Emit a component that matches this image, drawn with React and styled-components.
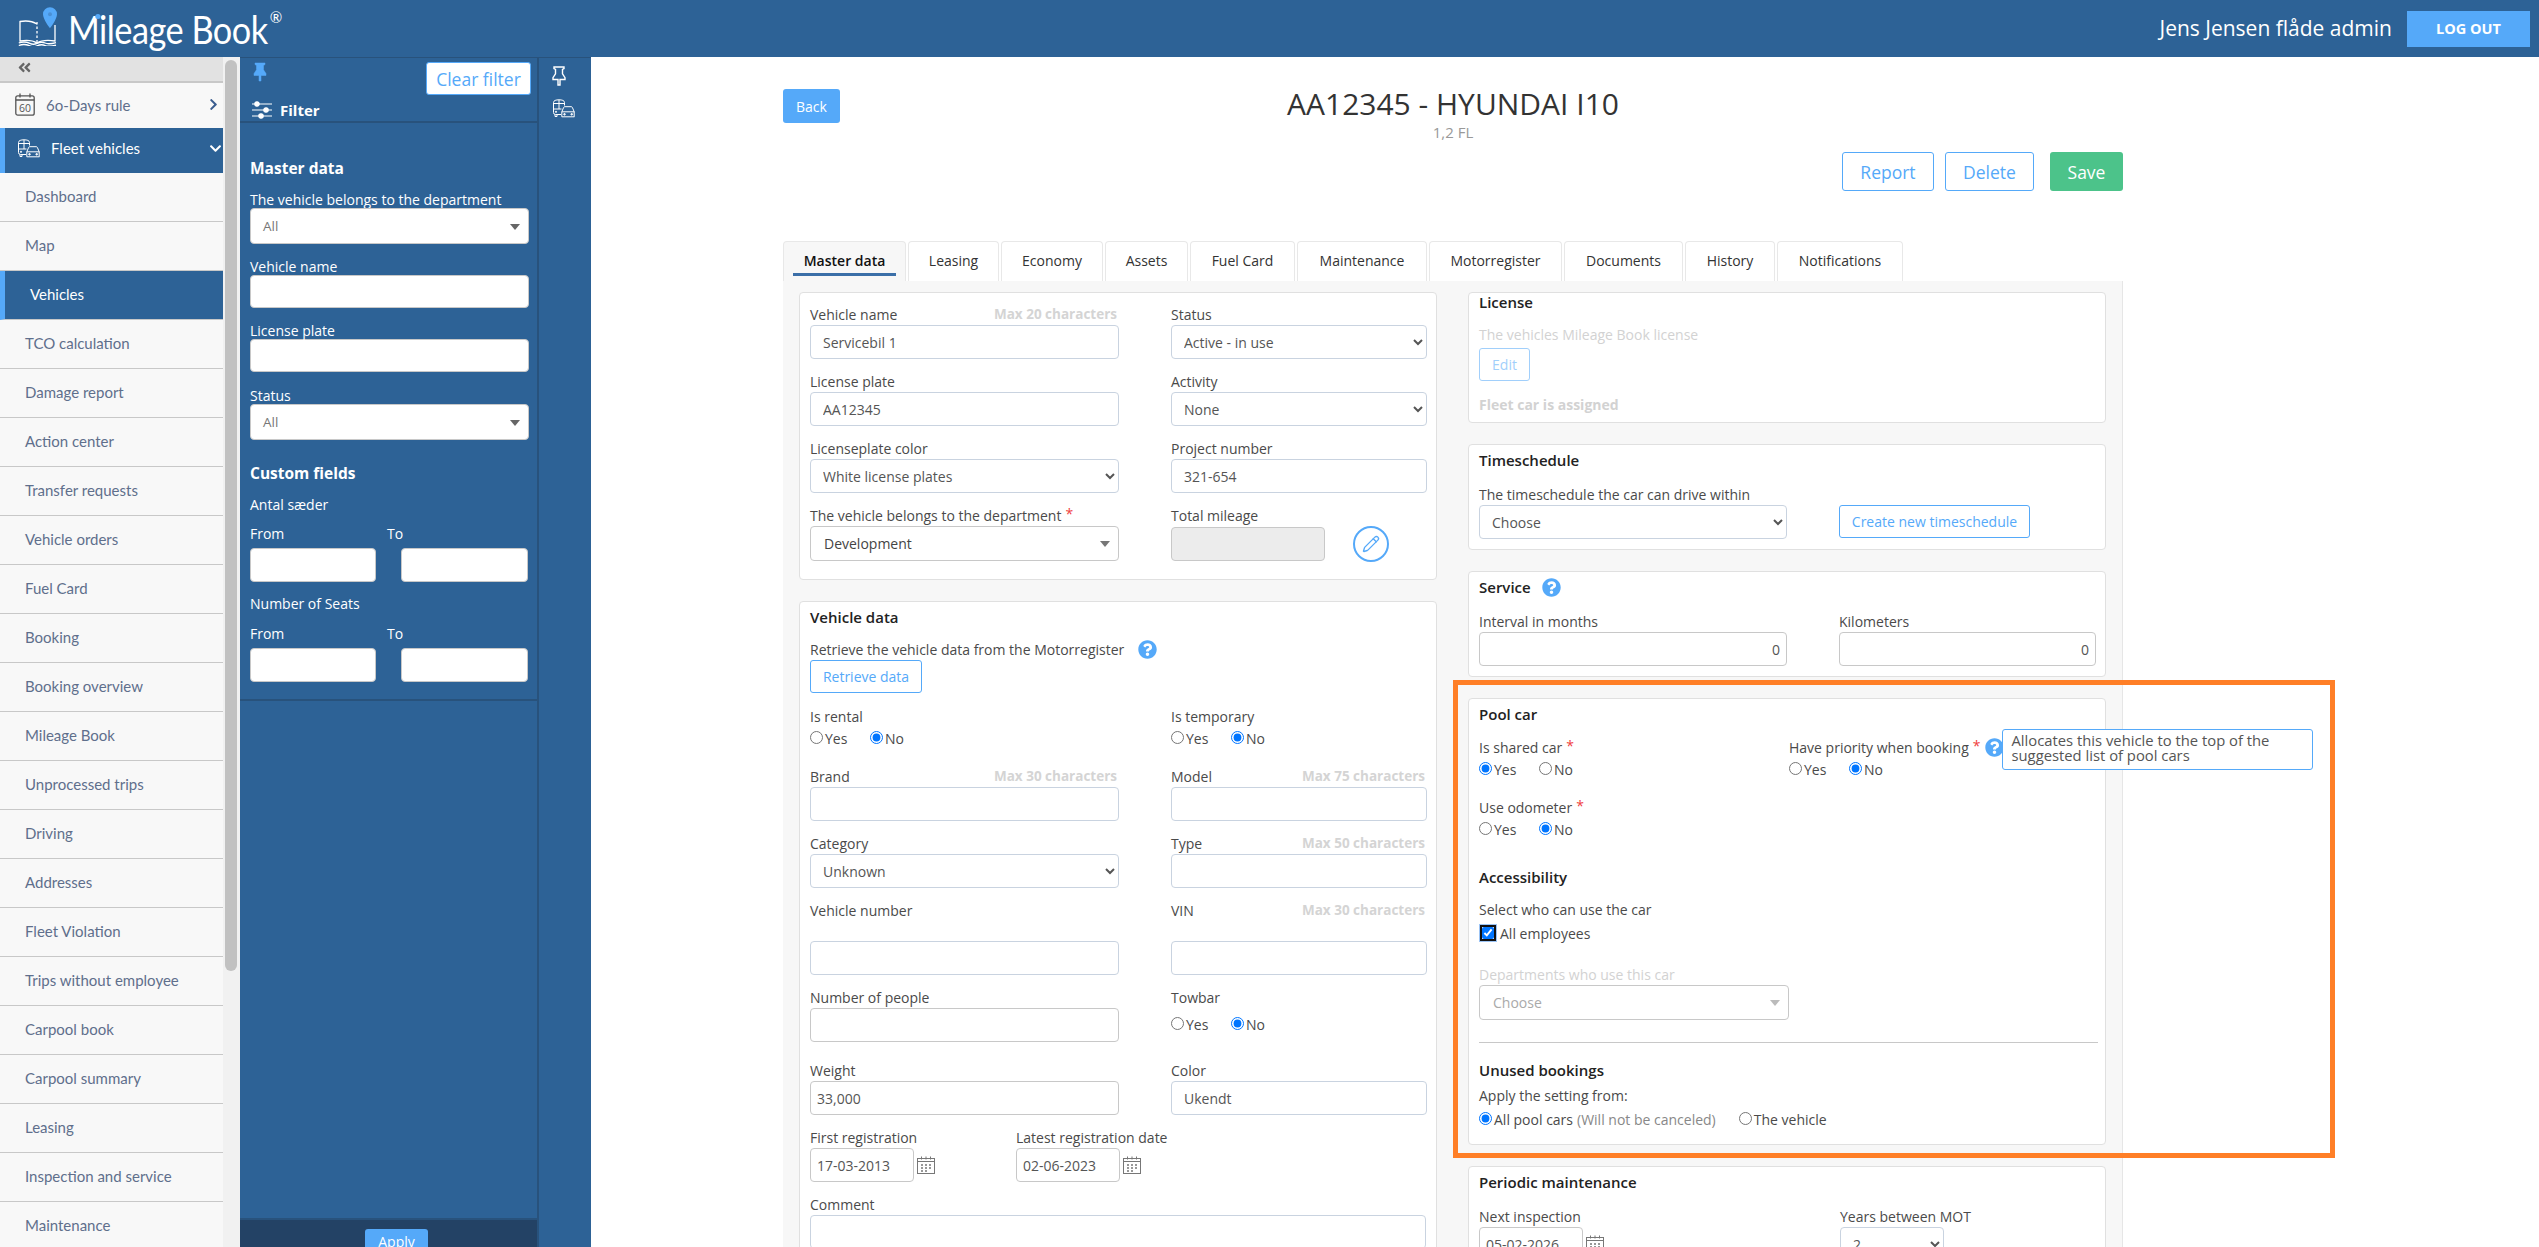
import styled, { createGlobalStyle } from "styled-components";
import { FaChevronRight, FaChevronDown, FaAngleDoubleLeft, FaQuestionCircle } from "react-icons/fa";
import { Pencil } from "lucide-react";

const BLUE = "#2d6296";
const SKY = "#55a9f9";

const GlobalStyle = createGlobalStyle`
  html, body {
    margin: 0;
    height: 100%;
    overflow: hidden;
    background: #fff;
    font-family: "Open Sans", "Liberation Sans", sans-serif;
    font-size: 14px;
    color: #4a4a4a;
  }
  * { box-sizing: border-box; }
`;

const Page = styled.div`
  height: 100vh;
  display: flex;
  flex-direction: column;
  overflow: hidden;
`;

/* ---- header ---- */
const TopBar = styled.header`
  height: 57px;
  flex: none;
  background: ${BLUE};
  display: flex;
  align-items: center;
  justify-content: space-between;
  padding: 0 9px 2px 18px;
  color: #fff;
`;
const Logo = styled.div`
  display: flex;
  align-items: flex-start;
  height: 43px;
  margin-top: 2px;
`;
const LogoText = styled.span`
  position: relative;
  display: inline-block;
  margin-left: 11px;
  margin-right: -27px;
  font-family: Lato, "Open Sans", sans-serif;
  font-size: 39px;
  line-height: 44px;
  letter-spacing: -0.6px;
  color: #fff;
  transform: scaleX(0.88);
  transform-origin: left center;
  &::after {
    content: "";
    position: absolute;
    left: 31px;
    top: 7px;
    width: 6px;
    height: 5px;
    border-radius: 50%;
    background: ${SKY};
  }
`;
const LogoMark = styled.sup`
  font-family: Lato, sans-serif;
  font-size: 15px;
  line-height: 15px;
  margin: 3px 0 0 2px;
  vertical-align: top;
`;
const UserBox = styled.div`
  display: flex;
  align-items: center;
  gap: 15px;
`;
const UserName = styled.span`
  font-size: 21px;
`;
const LogoutButton = styled.button`
  width: 123px;
  height: 36px;
  margin-top: 2px;
  border: 0;
  background: ${SKY};
  color: #fff;
  font: 700 14.5px "Open Sans", sans-serif;
`;

const Body = styled.div`
  flex: 1;
  min-height: 0;
  display: flex;
`;

/* ---- left menu ---- */
const SideMenu = styled.nav`
  width: 240px;
  flex: none;
  display: flex;
  overflow: hidden;
  background: #f1f1f1;
`;
const MenuList = styled.div`
  width: 223px;
  flex: none;
`;
const ScrollTrack = styled.div`
  flex: 1;
  padding: 3px 3px 0 2px;
`;
const ScrollThumb = styled.div`
  height: 911px;
  border-radius: 6px;
  background: #c1c1c1;
`;
const Collapse = styled.div`
  height: 26px;
  background: #e2e2e2;
  border-bottom: 2px solid #c8c8c8;
  padding: 3px 0 0 17px;
  color: #666;
  font-size: 15px;
  svg { display: block; }
`;
const MenuHead = styled.div`
  height: 45px;
  display: flex;
  align-items: center;
  padding-left: ${(p) => (p.$active ? 12 : 15)}px;
  padding-right: 3px;
  padding-bottom: ${(p) => (p.$active ? 5 : 2)}px;
  background: ${(p) => (p.$active ? BLUE : "#f8f8f8")};
  border-left: ${(p) => (p.$active ? `5px solid ${SKY}` : "0")};
  color: ${(p) => (p.$active ? "#fff" : "#5f6f8c")};
  font-family: Lato, sans-serif;
  font-size: 15px;
`;
const HeadLabel = styled.span`
  flex: 1;
  margin-left: ${(p) => p.$gap}px;
`;
const HeadChevron = styled.span`
  display: flex;
  font-size: 13px;
  color: ${(p) => p.$color};
  margin-right: ${(p) => p.$right}px;
`;
const MenuItem = styled.div`
  height: 49px;
  display: flex;
  align-items: center;
  padding-left: 25px;
  padding-bottom: 2px;
  background: ${(p) => (p.$active ? BLUE : "#f8f8f8")};
  border-left: ${(p) => (p.$active ? `5px solid ${SKY}` : "0")};
  border-bottom: 1px solid #c8c8c8;
  color: ${(p) => (p.$active ? "#fff" : "#5f6f8c")};
  font-family: Lato, sans-serif;
  font-size: 15px;
`;

/* ---- filter panel ---- */
const FilterPanel = styled.aside`
  width: 299px;
  flex: none;
  display: flex;
  flex-direction: column;
  background: ${BLUE};
  color: #fff;
  border-right: 2px solid #28527c;
  border-top: 1px solid #28527c;
`;
const FilterHead = styled.div`
  height: 65px;
  flex: none;
  display: grid;
  grid-template-columns: 1fr auto;
  grid-template-rows: 38px 1fr;
  padding: 4px 6px 0 13px;
  border-bottom: 2px solid #28527c;
`;
const ClearButton = styled.button`
  width: 105px;
  height: 33px;
  padding: 0;
  border: 1px solid ${SKY};
  border-radius: 3px;
  background: #fff;
  color: ${SKY};
  font: 17.5px "Open Sans", sans-serif;
`;
const FilterTitle = styled.div`
  grid-column: 1 / 3;
  display: flex;
  align-items: center;
  gap: 8px;
  margin-left: -1px;
  font-weight: 700;
  font-size: 15px;
  padding-bottom: 11px;
`;
const FilterForm = styled.div`
  padding: 35px 8px 3px 10px;
  border-bottom: 2px solid #28527c;
`;
const FilterHeading = styled.h4`
  margin: ${(p) => p.$top}px 0 ${(p) => p.$bottom}px;
  font-size: 15.5px;
  line-height: 20px;
  font-weight: 700;
`;
const FilterField = styled.div`
  margin-bottom: ${(p) => p.$mb ?? 15}px;
`;
const FilterLabel = styled.div`
  font-size: 14px;
  line-height: 16px;
  white-space: nowrap;
`;
const FilterInput = styled.div`
  height: ${(p) => p.$h ?? 33}px;
  background: #fff;
  border: 1px solid #c8c8c8;
  border-radius: 4px;
`;
const FilterSelect = styled(FilterInput)`
  position: relative;
  display: flex;
  align-items: center;
  padding-left: 12px;
  color: #777;
  font-size: 13.5px;
  &::after {
    content: "";
    position: absolute;
    right: 8px;
    top: 15px;
    border: 5px solid transparent;
    border-top: 6px solid #666;
    border-bottom: 0;
  }
`;
const RangeRow = styled.div`
  display: grid;
  grid-template-columns: 137px 143px;
  margin-bottom: 14px;
`;
const FromInput = styled(FilterInput)`
  width: 126px;
  height: 34px;
  margin-top: 6px;
`;
const ToInput = styled(FromInput)`
  width: 127px;
  margin-left: 14px;
`;
const ApplyBar = styled.div`
  margin-top: auto;
  height: 29px;
  flex: none;
  overflow: hidden;
  display: flex;
  justify-content: center;
  padding: 9px 0 0 16px;
  background: #234265;
  border-top: 2px solid #28527c;
`;
const ApplyButton = styled.button`
  width: 63px;
  height: 34px;
  border: 0;
  border-radius: 3px;
  background: ${SKY};
  color: #fff;
  font: 14px "Open Sans", sans-serif;
  padding-bottom: 10px;
`;

const Rail = styled.div`
  width: 52px;
  flex: none;
  background: ${BLUE};
  padding: 8px 0 0 13px;
  border-top: 1px solid #28527c;
  display: flex;
  flex-direction: column;
  gap: 13px;
  svg { display: block; }
`;

/* ---- main ---- */
const Main = styled.main`
  position: relative;
  flex: 1;
  min-width: 0;
  overflow: hidden;
  padding: 32px 0 0 192px;
`;
const Highlight = styled.div`
  position: absolute;
  left: 862px;
  top: 623px;
  width: 882px;
  height: 478px;
  border: 5px solid #ff7f27;
  pointer-events: none;
`;
const Content = styled.div`
  width: 1340px;
`;
const TitleRow = styled.div`
  display: grid;
  grid-template-columns: 1fr auto 1fr;
  align-items: start;
  height: 63px;
`;
const BackButton = styled.button`
  width: 57px;
  height: 34px;
  border: 0;
  border-radius: 3px;
  background: ${SKY};
  color: #fff;
  font: 14px "Open Sans", sans-serif;
`;
const TitleBlock = styled.div`
  text-align: center;
`;
const Title = styled.h1`
  margin: -3px 0 0;
  font-size: 30px;
  line-height: 36px;
  font-weight: 400;
  color: #333;
`;
const SubTitle = styled.div`
  margin-top: 2px;
  font-size: 15px;
  line-height: 16px;
  color: #999;
`;
const Actions = styled.div`
  display: flex;
  justify-content: flex-end;
  gap: 11px;
  height: 89px;
`;
const OutlineButton = styled.button`
  display: block;
  height: ${(p) => p.$h ?? 33}px;
  width: ${(p) => p.$w}px;
  margin-right: ${(p) => p.$right ?? 0}px;
  border: 1px solid ${SKY};
  border-radius: 3px;
  background: #fff;
  color: ${SKY};
  font: ${(p) => p.$size ?? 14}px "Open Sans", sans-serif;
  padding: 0;
  opacity: ${(p) => (p.$faded ? 0.55 : 1)};
`;
const SaveButton = styled.button`
  width: 73px;
  height: 39px;
  border: 0;
  border-radius: 3px;
  background: #4cc38a;
  color: #fff;
  font: 17.5px "Open Sans", sans-serif;
`;
const Tabs = styled.div`
  display: flex;
  gap: 2px;
  height: 40px;
`;
const Tab = styled.div`
  position: relative;
  width: ${(p) => p.$w}px;
  display: flex;
  align-items: center;
  justify-content: center;
  padding-bottom: 2px;
  border: 1px solid #e8e8e8;
  border-bottom: 0;
  border-radius: 4px 4px 0 0;
  background: ${(p) => (p.$active ? "#f7f7f7" : "#fff")};
  color: ${(p) => (p.$active ? "#111" : "#333")};
  font-weight: ${(p) => (p.$active ? 600 : 400)};
  &::after {
    content: "";
    display: ${(p) => (p.$active ? "block" : "none")};
    position: absolute;
    left: 9px;
    right: 9px;
    bottom: 5px;
    height: 3px;
    background: #3b6fa8;
  }
`;
const TabPanel = styled.div`
  display: flex;
  align-items: flex-start;
  gap: 31px;
  height: 1000px;
  padding: 11px 16px 0;
  background: #f7f7f7;
  border-right: 1px solid #e6e6e6;
`;
const Column = styled.div`
  width: 638px;
  flex: none;
  display: flex;
  flex-direction: column;
  gap: 21px;
`;
const Card = styled.section`
  background: #fff;
  border: 1px solid #e0e0e0;
  border-radius: 4px;
  padding: ${(p) => p.$top ?? 6}px 10px ${(p) => p.$bottom ?? 10}px;
`;
const CardTitle = styled.h3`
  display: flex;
  align-items: center;
  gap: 11px;
  margin: 0 0 ${(p) => p.$mb ?? 11}px;
  padding-bottom: 2px;
  height: 20px;
  font-size: 15px;
  line-height: 18px;
  font-weight: 600;
  color: #222;
`;
const Row = styled.div`
  display: grid;
  grid-template-columns: ${(p) => p.$cols ?? "309px 256px"};
  column-gap: ${(p) => p.$gap ?? 52}px;
  margin-bottom: ${(p) => p.$mb ?? 13}px;
`;
const Field = styled.div`
  min-width: 0;
`;
const Label = styled.div`
  display: flex;
  align-items: center;
  height: 20px;
  padding-bottom: 2px;
  white-space: nowrap;
  font-size: 14px;
  color: ${(p) => (p.$muted ? "#d2d2d2" : "#4a4a4a")};
  font-weight: ${(p) => (p.$bold ? 700 : 400)};
`;
const Hint = styled.span`
  margin-left: auto;
  padding-right: 2px;
  color: #d4d4d4;
  font-size: 13.5px;
  font-weight: 700;
`;
const Star = styled.span`
  align-self: flex-start;
  margin-left: 4px;
  color: #f04040;
  font-size: 14px;
  line-height: 16px;
`;
const Input = styled.input`
  display: block;
  width: ${(p) => p.$w ?? "100%"};
  height: 34px;
  margin-top: ${(p) => p.$mt ?? 0}px;
  padding: 0 ${(p) => p.$pad ?? 12}px;
  border: 1px solid ${(p) => (p.$gray ? "#c8c8c8" : "#c9d3e0")};
  border-radius: 4px;
  background: ${(p) => (p.$disabled ? "#ececec" : "#fff")};
  color: #555;
  font: 14px "Open Sans", sans-serif;
  text-align: ${(p) => p.$align ?? "left"};
  outline: none;
`;
const NativeSelect = styled.select`
  display: block;
  width: ${(p) => p.$w ?? "100%"};
  height: 34px;
  padding: 0 8px;
  border: 1px solid #c9d3e0;
  border-radius: 4px;
  background-color: #fff;
  color: #555;
  font: 14px "Open Sans", sans-serif;
`;
const CaretSelect = styled.div`
  position: relative;
  display: flex;
  align-items: center;
  height: 35px;
  width: ${(p) => p.$w ?? "100%"};
  padding-left: 13px;
  border: 1px solid #c8c8c8;
  border-radius: 4px;
  color: ${(p) => (p.$muted ? "#aaa" : "#444")};
  &::after {
    content: "";
    position: absolute;
    right: 8px;
    top: 14px;
    border: 5px solid transparent;
    border-top: 6px solid ${(p) => (p.$muted ? "#bbb" : "#777")};
    border-bottom: 0;
  }
`;
const MileageRow = styled.div`
  display: flex;
  align-items: center;
  gap: 28px;
`;
const MileageEdit = styled.button`
  width: 36px;
  height: 36px;
  display: flex;
  align-items: center;
  justify-content: center;
  padding: 0;
  border: 2px solid ${SKY};
  border-radius: 50%;
  background: #fff;
  color: ${SKY};
`;
const InlineHelp = styled.span`
  display: inline-flex;
  color: ${SKY};
  font-size: ${(p) => p.$size ?? 19}px;
  margin-left: ${(p) => p.$left ?? 0}px;
`;
const RetrieveLine = styled.div`
  display: flex;
  align-items: center;
  height: 20px;
  margin-bottom: 1px;
`;
const Radios = styled.div`
  display: flex;
  height: 22px;
  margin-top: ${(p) => p.$mt ?? 0}px;
  margin-bottom: ${(p) => p.$mb ?? 0}px;
`;
const RadioLabel = styled.label`
  display: flex;
  align-items: center;
  min-width: 60px;
  margin-right: ${(p) => p.$right ?? 0}px;
  color: #4a4a4a;
  input {
    width: 13px;
    height: 13px;
    margin: -2px 2px 0 0;
  }
`;
const Muted = styled.span`
  margin-left: 4px;
  color: #888;
`;
const DateLine = styled.div`
  display: flex;
  align-items: center;
  gap: 3px;
`;
const DateGroup = styled.div`
  width: 206px;
`;
const CheckLine = styled.label`
  display: flex;
  align-items: center;
  gap: 6px;
  height: 22px;
  margin-top: 2px;
  margin-bottom: 21px;
  padding-left: 3px;
  input {
    width: 12px;
    height: 12px;
    margin: 0;
    border-radius: 2px;
    box-shadow: 0 0 0 2px #111, 0 0 0 3px #9cc4f5;
  }
`;
const Rule = styled.hr`
  margin: 22px -3px 18px 0;
  border: 0;
  border-top: 1px solid #c8c8c8;
`;
const Tip = styled.div`
  position: absolute;
  left: 17px;
  top: -9px;
  width: 311px;
  height: 41px;
  padding: 3px 8px;
  background: #fff;
  border: 1px solid ${SKY};
  border-radius: 3px;
  font-size: 14.8px;
  line-height: 15px;
  white-space: normal;
  color: #555;
  z-index: 2;
`;
const TipAnchor = styled.span`
  position: relative;
  display: inline-flex;
  margin-left: 5px;
  color: ${SKY};
  font-size: 19px;
`;
const Spacer = styled.div`
  height: ${(p) => p.$h}px;
`;

/* ---- drawings ---- */
const PinIcon = ({ solid }) => (
  <svg width="14" height="20" viewBox="0 0 14 20" fill={solid ? SKY : "none"} stroke={solid ? SKY : "#fff"} strokeWidth={solid ? 0.5 : 1.4}>
    <path d="M2 1h10v1.6l-1.5.8v4.4L13 11.6v1.9H8V19H6v-5.5H1v-1.9l2.5-3.8V3.4L2 2.6z" />
  </svg>
);

const BusCarIcon = ({ w = 24, h = 19 }) => (
  <svg width={w} height={h} viewBox="0 0 24 19" fill="none" stroke="#fff" strokeWidth="1">
    <path d="M9 15.5H3.5A2 2 0 0 1 1.5 13.5V3.5C1.5 1.500 4 .8 7 .8s5.500.7 5.500 2.700V6.500" />
    <path d="M1.500 4.500h11M1.500 10h8M7 .8v9.200M3 15.500v2h2v-2" />
    <path d="M9.800 17.800v-5l1.800-4.300a1.200 1.200 0 0 1 1.100-.8h6.600a1.200 1.200 0 0 1 1.100.8l1.800 4.300v5" />
    <path d="M9.800 17.800h12.600M9.800 12.800h12.600" />
    <circle cx="4" cy="12.800" r=".6" fill="#fff" />
    <circle cx="12.500" cy="15.300" r=".8" fill="#fff" />
    <circle cx="19.700" cy="15.300" r=".8" fill="#fff" />
  </svg>
);

const SlidersIcon = () => (
  <svg width="20" height="18" viewBox="0 0 20 18" fill="#fff" stroke="#fff" strokeWidth="1.2">
    <path d="M0 3h20M0 9h20M0 15h20" />
    <circle cx="5" cy="3" r="2.200" />
    <circle cx="14" cy="9" r="2.200" />
    <circle cx="9" cy="15" r="2.200" />
  </svg>
);

const SixtyIcon = () => (
  <svg width="20" height="23" viewBox="0 0 20 23" fill="none" stroke="#555" strokeWidth="1.300">
    <rect x=".8" y="2.800" width="18.400" height="19.400" rx="2" />
    <path d="M.8 7h18.400M5 .5v4M15 .5v4" />
    <text x="10" y="19" textAnchor="middle" fontFamily="Open Sans" fontSize="10.500" fill="#555" stroke="none">60</text>
  </svg>
);

const CalendarIcon = () => (
  <svg width="18" height="18" viewBox="0 0 18 18" fill="none" stroke="#777" strokeWidth="1">
    <rect x=".5" y="2.500" width="17" height="15" />
    <path d="M.5 5.500h17M4.500 .5v3M9 .5v3M13.500 .5v3" />
    <path d="M4 9h2M8 9h2M12 9h2M4 12h2M8 12h2M12 12h2M4 15h2M8 15h2" strokeWidth="1.400" />
  </svg>
);

const BookLogo = () => (
  <svg width="39" height="39" viewBox="0 0 39 39" fill="none" stroke="#fff" strokeWidth="1.300">
    <path d="M19 17C15 14.500 8 13.500 2 14.500V34C8 33 15 33.500 19 36" />
    <path d="M19 36C23 33.500 30 33 37 34V18" />
    <path d="M19 15v21" strokeDasharray="2.500 2" />
    <path d="M.8 36c5-2 8-1 11 .4s5 1 7.200 0 5-1.800 8-.4 6 1 11-.4" />
    <path d="M.8 38.500c5-2 8-1 11 .4s5 1 7.200 0 5-1.800 8-.4 6 1 11-.4" />
    <path d="M32 .3a7 7 0 0 1 7 7c0 5-7 14-7 14s-7-9-7-14a7 7 0 0 1 7-7z" fill={SKY} stroke="none" />
    <circle cx="32" cy="7.300" r="2" fill="#4a90d6" stroke="none" />
  </svg>
);

/* ---- helpers ---- */
const YesNo = ({ name, value, mt, mb }) => (
  <Radios $mt={mt} $mb={mb}>
    <RadioLabel>
      <input type="radio" name={name} defaultChecked={value === "yes"} />
      Yes
    </RadioLabel>
    <RadioLabel>
      <input type="radio" name={name} defaultChecked={value === "no"} />
      No
    </RadioLabel>
  </Radios>
);

const DateField = ({ label, value }) => (
  <DateGroup>
    <Label>{label}</Label>
    <DateLine>
      <Input defaultValue={value} $w="104px" $pad={6} $gray />
      <CalendarIcon />
    </DateLine>
  </DateGroup>
);

const menu = [
  "Dashboard", "Map", "Vehicles", "TCO calculation", "Damage report", "Action center",
  "Transfer requests", "Vehicle orders", "Fuel Card", "Booking", "Booking overview",
  "Mileage Book", "Unprocessed trips", "Driving", "Addresses", "Fleet Violation",
  "Trips without employee", "Carpool book", "Carpool summary", "Leasing",
  "Inspection and service", "Maintenance",
];

const tabs = [
  ["Master data", 123], ["Leasing", 91], ["Economy", 102], ["Assets", 83], ["Fuel Card", 105],
  ["Maintenance", 130], ["Motorregister", 133], ["Documents", 119], ["History", 90], ["Notifications", 126],
];

export default function App() {
  return (
    <Page>
      <GlobalStyle />
      <TopBar>
        <Logo>
          <BookLogo />
          <LogoText>Mileage Book</LogoText>
          <LogoMark>®</LogoMark>
        </Logo>
        <UserBox>
          <UserName>Jens Jensen flåde admin</UserName>
          <LogoutButton>LOG OUT</LogoutButton>
        </UserBox>
      </TopBar>

      <Body>
        <SideMenu>
          <MenuList>
            <Collapse><FaAngleDoubleLeft /></Collapse>
            <MenuHead>
              <SixtyIcon />
              <HeadLabel $gap={11}>6o-Days rule</HeadLabel>
              <HeadChevron $color="#3b5d8f" $right={0}><FaChevronRight /></HeadChevron>
            </MenuHead>
            <MenuHead $active>
              <BusCarIcon />
              <HeadLabel $gap={10}>Fleet vehicles</HeadLabel>
              <HeadChevron $color="#fff" $right={-2}><FaChevronDown /></HeadChevron>
            </MenuHead>
            {menu.map((item) => (
              <MenuItem key={item} $active={item === "Vehicles"}>{item}</MenuItem>
            ))}
          </MenuList>
          <ScrollTrack><ScrollThumb /></ScrollTrack>
        </SideMenu>

        <FilterPanel>
          <FilterHead>
            <PinIcon solid />
            <ClearButton>Clear filter</ClearButton>
            <FilterTitle><SlidersIcon />Filter</FilterTitle>
          </FilterHead>
          <FilterForm>
            <FilterHeading $top={0} $bottom={14}>Master data</FilterHeading>
            <FilterField>
              <FilterLabel>The vehicle belongs to the department</FilterLabel>
              <FilterSelect $h={36}>All</FilterSelect>
            </FilterField>
            <FilterField>
              <FilterLabel>Vehicle name</FilterLabel>
              <FilterInput />
            </FilterField>
            <FilterField $mb={16}>
              <FilterLabel>License plate</FilterLabel>
              <FilterInput />
            </FilterField>
            <FilterField $mb={0}>
              <FilterLabel>Status</FilterLabel>
              <FilterSelect $h={36}>All</FilterSelect>
            </FilterField>
            <FilterHeading $top={23} $bottom={14}>Custom fields</FilterHeading>
            <FilterField $mb={13}><FilterLabel>Antal sæder</FilterLabel></FilterField>
            <RangeRow>
              <div><FilterLabel>From</FilterLabel><FromInput /></div>
              <div><FilterLabel>To</FilterLabel><ToInput /></div>
            </RangeRow>
            <FilterField $mb={14}><FilterLabel>Number of Seats</FilterLabel></FilterField>
            <RangeRow>
              <div><FilterLabel>From</FilterLabel><FromInput /></div>
              <div><FilterLabel>To</FilterLabel><ToInput /></div>
            </RangeRow>
          </FilterForm>
          <ApplyBar><ApplyButton>Apply</ApplyButton></ApplyBar>
        </FilterPanel>

        <Rail>
          <PinIcon />
          <BusCarIcon />
        </Rail>

        <Main>
          <Content>
            <TitleRow>
              <BackButton>Back</BackButton>
              <TitleBlock>
                <Title>AA12345 - HYUNDAI I10</Title>
                <SubTitle>1,2 FL</SubTitle>
              </TitleBlock>
            </TitleRow>
            <Actions>
              <OutlineButton $w={92} $h={39} $size={17.5}>Report</OutlineButton>
              <OutlineButton $w={89} $h={39} $size={17.5} $right={5}>Delete</OutlineButton>
              <SaveButton>Save</SaveButton>
            </Actions>
            <Tabs>
              {tabs.map(([name, w], i) => (
                <Tab key={name} $w={w} $active={i === 0}>{name}</Tab>
              ))}
            </Tabs>
            <TabPanel>
              <Column>
                <Card $top={12} $bottom={17}>
                  <Row>
                    <Field>
                      <Label>Vehicle name<Hint>Max 20 characters</Hint></Label>
                      <Input defaultValue="Servicebil 1" />
                    </Field>
                    <Field>
                      <Label>Status</Label>
                      <NativeSelect><option>Active - in use</option></NativeSelect>
                    </Field>
                  </Row>
                  <Row>
                    <Field>
                      <Label>License plate</Label>
                      <Input defaultValue="AA12345" />
                    </Field>
                    <Field>
                      <Label>Activity</Label>
                      <NativeSelect><option>None</option></NativeSelect>
                    </Field>
                  </Row>
                  <Row>
                    <Field>
                      <Label>Licenseplate color</Label>
                      <NativeSelect><option>White license plates</option></NativeSelect>
                    </Field>
                    <Field>
                      <Label>Project number</Label>
                      <Input defaultValue="321-654" />
                    </Field>
                  </Row>
                  <Row $mb={0}>
                    <Field>
                      <Label>The vehicle belongs to the department<Star>*</Star></Label>
                      <CaretSelect>Development</CaretSelect>
                    </Field>
                    <Field>
                      <Label>Total mileage</Label>
                      <MileageRow>
                        <Input $w="154px" $gray $disabled readOnly />
                        <MileageEdit><Pencil size={18} strokeWidth={1.8} /></MileageEdit>
                      </MileageRow>
                    </Field>
                  </Row>
                </Card>

                <Card>
                  <CardTitle $mb={11}>Vehicle data</CardTitle>
                  <RetrieveLine>
                    Retrieve the vehicle data from the Motorregister
                    <InlineHelp $left={14}><FaQuestionCircle /></InlineHelp>
                  </RetrieveLine>
                  <OutlineButton $w={112} $h={33}>Retrieve data</OutlineButton>
                  <Spacer $h={14} />
                  <Row $mb={18}>
                    <Field><Label>Is rental</Label><YesNo name="rental" value="no" /></Field>
                    <Field><Label>Is temporary</Label><YesNo name="temporary" value="no" /></Field>
                  </Row>
                  <Row>
                    <Field><Label>Brand<Hint>Max 30 characters</Hint></Label><Input /></Field>
                    <Field><Label>Model<Hint>Max 75 characters</Hint></Label><Input /></Field>
                  </Row>
                  <Row>
                    <Field>
                      <Label>Category</Label>
                      <NativeSelect><option>Unknown</option></NativeSelect>
                    </Field>
                    <Field><Label>Type<Hint>Max 50 characters</Hint></Label><Input /></Field>
                  </Row>
                  <Row>
                    <Field><Label>Vehicle number</Label><Input $mt={20} /></Field>
                    <Field><Label>VIN<Hint>Max 30 characters</Hint></Label><Input $mt={20} /></Field>
                  </Row>
                  <Row $mb={19}>
                    <Field><Label>Number of people</Label><Input $gray /></Field>
                    <Field><Label>Towbar</Label><YesNo name="towbar" value="no" mt={5} /></Field>
                  </Row>
                  <Row>
                    <Field><Label>Weight</Label><Input defaultValue="33,000" $pad={6} $gray /></Field>
                    <Field><Label>Color</Label><Input defaultValue="Ukendt" /></Field>
                  </Row>
                  <Row $cols="206px 206px" $gap={0}>
                    <DateField label="First registration" value="17-03-2013" />
                    <DateField label="Latest registration date" value="02-06-2023" />
                  </Row>
                  <Field>
                    <Label>Comment</Label>
                    <Input />
                  </Field>
                </Card>
              </Column>

              <Column>
                <Card $top={0} $bottom={7}>
                  <CardTitle $mb={12}>License</CardTitle>
                  <Label $muted>The vehicles Mileage Book license</Label>
                  <Spacer $h={3} />
                  <OutlineButton $w={51} $h={33} $faded>Edit</OutlineButton>
                  <Spacer $h={14} />
                  <Label $muted $bold>Fleet car is assigned</Label>
                </Card>

                <Card $bottom={10}>
                  <CardTitle $mb={14}>Timeschedule</CardTitle>
                  <Row $cols="308px 257px" $mb={0}>
                    <Field>
                      <Label>The timeschedule the car can drive within</Label>
                      <NativeSelect><option>Choose</option></NativeSelect>
                    </Field>
                    <Field>
                      <Spacer $h={20} />
                      <OutlineButton $w={191} $h={33}>Create new timeschedule</OutlineButton>
                    </Field>
                  </Row>
                </Card>

                <Card $bottom={10}>
                  <CardTitle $mb={14}>Service<InlineHelp><FaQuestionCircle /></InlineHelp></CardTitle>
                  <Row $cols="308px 257px" $mb={0}>
                    <Field>
                      <Label>Interval in months</Label>
                      <Input defaultValue="0" $align="right" $pad={6} $gray />
                    </Field>
                    <Field>
                      <Label>Kilometers</Label>
                      <Input defaultValue="0" $align="right" $pad={6} $gray />
                    </Field>
                  </Row>
                </Card>

                <Card $bottom={14}>
                  <CardTitle $mb={13}>Pool car</CardTitle>
                  <Row $cols="310px 1fr" $gap={0} $mb={18}>
                    <Field>
                      <Label>Is shared car<Star>*</Star></Label>
                      <YesNo name="shared" value="yes" />
                    </Field>
                    <Field>
                      <Label>
                        Have priority when booking<Star>*</Star>
                        <TipAnchor>
                          <FaQuestionCircle />
                          <Tip>Allocates this vehicle to the top of the suggested list of pool cars</Tip>
                        </TipAnchor>
                      </Label>
                      <YesNo name="priority" value="no" />
                    </Field>
                  </Row>
                  <Field>
                    <Label>Use odometer<Star>*</Star></Label>
                    <YesNo name="odometer" value="no" mb={28} />
                  </Field>
                  <CardTitle $mb={12}>Accessibility</CardTitle>
                  <Label>Select who can use the car</Label>
                  <CheckLine>
                    <input type="checkbox" defaultChecked />
                    All employees
                  </CheckLine>
                  <Label $muted>Departments who use this car</Label>
                  <CaretSelect $w="310px" $muted>Choose</CaretSelect>
                  <Rule />
                  <CardTitle $mb={5}>Unused bookings</CardTitle>
                  <Label>Apply the setting from:</Label>
                  <Radios $mt={2}>
                    <RadioLabel $right={23}>
                      <input type="radio" name="unused" defaultChecked />
                      All pool cars<Muted>(Will not be canceled)</Muted>
                    </RadioLabel>
                    <RadioLabel>
                      <input type="radio" name="unused" />
                      The vehicle
                    </RadioLabel>
                  </Radios>
                </Card>

                <Card>
                  <CardTitle $mb={14}>Periodic maintenance</CardTitle>
                  <Row $cols="361px 104px" $gap={0}>
                    <Field>
                      <Label>Next inspection</Label>
                      <DateLine>
                        <Input defaultValue="05-02-2026" $w="104px" $pad={6} $gray />
                        <CalendarIcon />
                      </DateLine>
                    </Field>
                    <Field>
                      <Label>Years between MOT</Label>
                      <NativeSelect><option>2</option></NativeSelect>
                    </Field>
                  </Row>
                </Card>
              </Column>
            </TabPanel>
          </Content>
          <Highlight />
        </Main>
      </Body>
    </Page>
  );
}
